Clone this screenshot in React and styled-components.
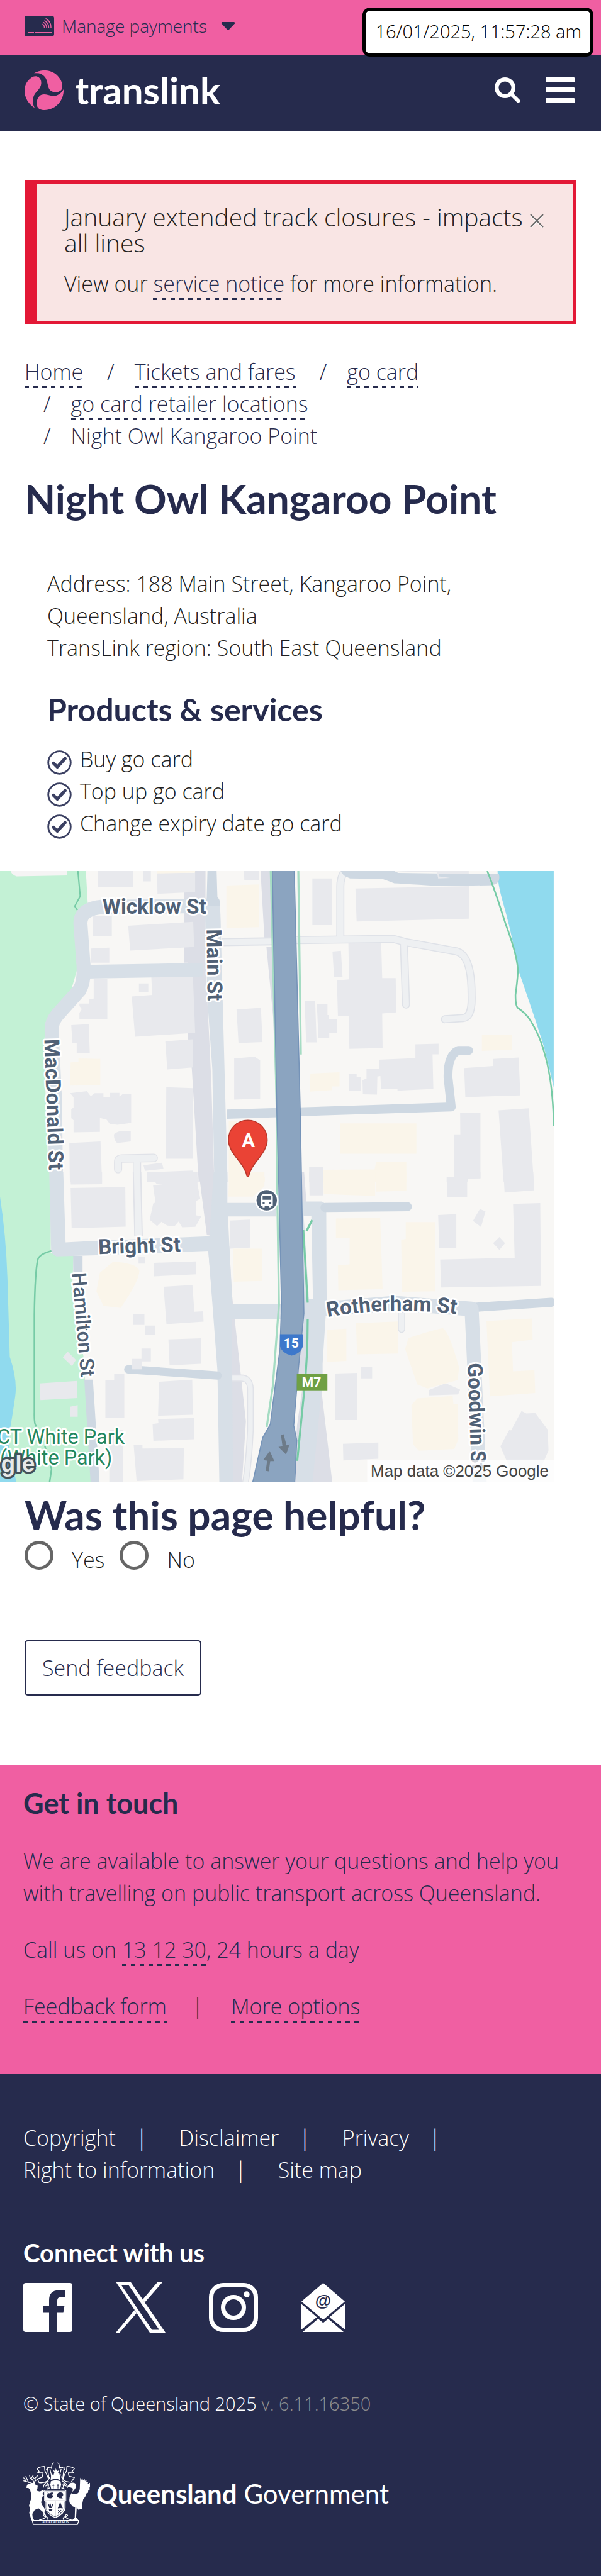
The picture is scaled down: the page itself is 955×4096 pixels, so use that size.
import React from 'react';
import styled, { createGlobalStyle, css } from 'styled-components';

const navy = '#262b4d';
const pink = '#f05fa2';
const ink = '#1f1f22';

const GlobalStyle = createGlobalStyle`
  * { box-sizing: border-box; }
  body {
    margin: 0;
    background: #fff;
    color: ${ink};
    font-family: 'Open Sans', 'Noto Sans', sans-serif;
    font-weight: 300;
    font-size: 34px;
    line-height: 51px;
  }
  h1, h2, h3, p, ul, ol { margin: 0; padding: 0; }
  ul, ol { list-style: none; }
  svg { display: block; }
`;

const Page = styled.div`
  position: relative;
`;

const TopBar = styled.div`
  display: flex;
  align-items: center;
  height: 88px;
  padding: 0 39px 5px;
  background: ${pink};
`;

const PaymentsButton = styled.button`
  display: flex;
  align-items: center;
  padding: 0;
  border: 0;
  background: none;
  color: ${navy};
  font: inherit;
  font-size: 28px;
`;

const PaymentsLabel = styled.span`
  margin: 0 22px 0 12px;
`;

const Clock = styled.time`
  position: absolute;
  top: 12px;
  right: 12px;
  padding: 2px 14px 4px 15px;
  border: 5px solid #000;
  border-radius: 12px;
  background: #fff;
  color: #000;
  font-size: 29px;
  line-height: 62px;
`;

const Header = styled.header`
  display: flex;
  align-items: center;
  height: 120px;
  padding: 0 42px 10px 39px;
  background: ${navy};
`;

const BrandLink = styled.a`
  display: flex;
  align-items: center;
  gap: 18px;
  margin-right: auto;
  color: #fff;
  text-decoration: none;
`;

const BrandName = styled.span`
  font: 700 60px/60px Lato, 'Open Sans', sans-serif;
`;

const IconButton = styled.button`
  padding: 0;
  margin-left: ${(p) => p.$gap || 0}px;
  border: 0;
  background: none;
`;

const Main = styled.main`
  padding: 79px 39px 111px;
`;

const Alert = styled.section`
  display: flex;
  align-items: flex-start;
  padding: 32px 47px 33px 43px;
  border: 5px solid #e31836;
  border-left-width: 20px;
  background: #f9e5e4;
`;

const AlertBody = styled.div`
  flex: 1;
`;

const AlertTitle = styled.h2`
  margin-bottom: 20px;
  font-size: 39px;
  font-weight: 300;
  line-height: 41px;
`;

const CloseButton = styled(IconButton)`
  margin: 16px 0 0;
`;

const Link = styled.a`
  padding-bottom: 3px;
  color: ${navy};
  text-decoration: none;
  background: linear-gradient(90deg, ${navy} 50%, transparent 0) left bottom / 14px 3px repeat-x;
`;

const Breadcrumbs = styled.ol`
  display: flex;
  flex-wrap: wrap;
  column-gap: 8px;
  margin-top: 51px;
  color: ${navy};
`;

const Crumb = styled.li`
  & + &::before {
    content: '/';
    padding: 0 32px 0 30px;
  }
`;

const heading = css`
  color: ${navy};
  font-family: Lato, 'Open Sans', sans-serif;
  font-weight: 700;
`;

const PageTitle = styled.h1`
  ${heading}
  margin-top: 38px;
  font-size: 64px;
  line-height: 72px;
`;

const SectionTitle = styled.h2`
  ${heading}
  font-size: 45px;
  line-height: 56px;
`;

const Details = styled.div`
  margin: 74px 36px 50px;
`;

const ServicesTitle = styled(SectionTitle)`
  margin: 44px 0 26px;
  font-size: 50px;
`;

const Service = styled.li`
  display: flex;
  gap: 13px;

  svg { margin-top: 11px; }
`;

const MapFrame = styled.figure`
  margin: 0 36px 16px -39px;

  svg { width: 100%; height: auto; }
`;

const FeedbackTitle = styled.h2`
  ${heading}
  font-size: 64px;
  line-height: 72px;
`;

const RadioRow = styled.fieldset`
  display: flex;
  gap: 24px;
  margin: 5px 0 102px;
  padding: 0;
  border: 0;
`;

const RadioLabel = styled.label`
  display: flex;
  align-items: flex-start;
  gap: 29px;

  span { margin-top: 5px; }
`;

const Radio = styled.input`
  appearance: none;
  width: 46px;
  height: 46px;
  margin: 0;
  border: 5px solid #666;
  border-radius: 50%;

  &:checked { background: radial-gradient(#666 45%, transparent 50%); }
`;

const SendButton = styled.button`
  height: 88px;
  padding: 0 26px;
  border: 2px solid ${navy};
  border-radius: 5px;
  background: #fff;
  color: ${navy};
  font: inherit;
`;

const Contact = styled.section`
  display: flex;
  flex-direction: column;
  gap: 39px;
  padding: 32px 37px 81px;
  background: ${pink};
  color: ${navy};
`;

const ContactLinks = styled.div`
  display: flex;
`;

const Divider = styled.span`
  margin: 0 44px 0 40px;
`;

const Footer = styled.footer`
  padding: 77px 37px 82px;
  background: ${navy};
  color: #fff;
`;

const FooterLinks = styled.ul`
  display: flex;
  flex-wrap: wrap;
  column-gap: 50px;
`;

const FooterItem = styled.li`
  &:not(:last-child)::after {
    content: '|';
    margin-left: 32px;
  }
`;

const FooterLink = styled.a`
  color: inherit;
  text-decoration: none;
`;

const ConnectTitle = styled.h2`
  ${heading}
  margin: 83px 0 24px;
  color: #fff;
  font-size: 40px;
  line-height: 46px;
`;

const Socials = styled.ul`
  display: flex;
  gap: 69px;
  height: 80px;
`;

const Copyright = styled.p`
  margin: 87px 0 68px;
  font-size: 29px;
`;

const Version = styled.span`
  color: #8d8d8d;
`;

const GovLink = styled.a`
  display: inline-flex;
  align-items: center;
  gap: 10px;
  color: #fff;
  font: 400 42px/52px Lato, 'Open Sans', sans-serif;
  text-decoration: none;

  strong { font-weight: 700; }
`;

function CardIcon() {
  return (
    <svg width="47" height="33" viewBox="0 0 47 33" fill="none" stroke={pink} aria-hidden="true">
      <rect width="47" height="33" rx="4" fill={navy} stroke="none" />
      <path d="M5 27h10M16.500 27H43" strokeWidth="2" />
      <path d="M28.500 13q3 2 3 6M30 10.500q5 3 5 8.500M31.500 7.500q7 4 7 11.500M33.500 4.500q9 5 8.500 14.500" strokeWidth="1.500" />
    </svg>
  );
}

function CaretIcon() {
  return (
    <svg width="23" height="13" viewBox="0 0 23 13" aria-hidden="true">
      <path d="M2 0h19q2 1 1 2.500L12.500 12.500q-1 1-2 0L1 2.500Q0 1 2 0z" fill={navy} />
    </svg>
  );
}

function SwirlLogo() {
  return (
    <svg width="62" height="63" viewBox="0 0 62 63" fill={pink} aria-hidden="true">
      <path d="M15 4.600C27-3 43-1 52 8c9 9 9 18 6.500 23-5 5-15 5-19-1C36 24 37 16 32 10 28 5 22 3.500 15 4.600z" />
      <path d="M13 10C5 15 0 22 0 32c0 12 7 22 16 27.500C11 50 13 40 19 34c5-5 9-11 7-18-2-6-7-8-13-6z" />
      <path d="M62 30c1 18-13 33-30 33-6 0-10-1.500-12-6-2-6 0-13 4-16.500 6-5 13-1 20 0 8 1 14-4 18-10.500z" />
    </svg>
  );
}

function SearchIcon() {
  return (
    <svg width="41" height="41" viewBox="0 0 41 41" fill="none" stroke="#fff" aria-hidden="true">
      <circle cx="16.500" cy="16.500" r="13.300" strokeWidth="6.400" />
      <path d="M26.500 26.500l11 11" strokeWidth="6" strokeLinecap="round" />
    </svg>
  );
}

function BurgerIcon() {
  return (
    <svg width="46" height="41" viewBox="0 0 46 41" fill="#fff" aria-hidden="true">
      <rect width="46" height="8" rx="1" />
      <rect y="16" width="46" height="8" rx="1" />
      <rect y="33" width="46" height="8" rx="1" />
    </svg>
  );
}

function CloseIcon() {
  return (
    <svg width="22" height="23" viewBox="0 0 22 23" fill="none" aria-hidden="true">
      <path d="M1 3l20 20M21 3L1 23" stroke="#fff" strokeWidth="1.500" />
      <path d="M1 1l20 20M21 1L1 21" stroke="#666" strokeWidth="2" />
    </svg>
  );
}

function TickIcon() {
  return (
    <svg width="39" height="39" viewBox="0 0 39 39" fill="none" stroke="#3b4062" aria-hidden="true">
      <circle cx="19.500" cy="19.500" r="17.800" strokeWidth="2.800" />
      <path d="M10 20.500l6 6L28.500 13" strokeWidth="5" strokeLinecap="round" strokeLinejoin="round" />
    </svg>
  );
}

function FacebookIcon() {
  return (
    <svg width="78" height="80" viewBox="0 -1 78 80" fill="#fff" aria-hidden="true">
      <path d="M4 0h70q4 0 4 4v70q0 4-4 4H54V47.500h9.500L65.500 36H54v-8q0-5.500 5.500-5.500H66v-11h-9q-16 0-16 16V36H31v11.500h10V78H4q-4 0-4-4V4q0-4 4-4z" />
    </svg>
  );
}

function XIcon() {
  return (
    <svg width="79" height="80" viewBox="0 0 79 80" fill="#fff" aria-hidden="true">
      <path fillRule="evenodd" d="M.5 0H24l55 80H54zM8.500 4l49 71.500H69L20 4z" />
      <path d="M66 0h8L46 32l-3-5zM0 80h6l27-31-3-5z" />
    </svg>
  );
}

function InstagramIcon() {
  return (
    <svg width="78" height="80" viewBox="0 -1 78 80" fill="none" stroke="#fff" strokeWidth="7" aria-hidden="true">
      <rect x="3.500" y="3.500" width="71" height="71" rx="19" />
      <circle cx="39" cy="39" r="16.500" />
      <circle cx="60" cy="18" r="4.700" fill="#fff" stroke="none" />
    </svg>
  );
}

function MailIcon() {
  return (
    <svg width="69" height="80" viewBox="0 -1 69 80" fill="#fff" aria-hidden="true">
      <path d="M34.500 0L69 29.500 34.500 58.500 0 29.500zM0 33.500l24.500 21L0 74zM69 33.500l-24.500 21L69 74zM2 78l24.500-21 8 6.500 8-6.500L67 78z" />
      <text x="34.500" y="37" textAnchor="middle" fontFamily="Liberation Sans, sans-serif" fontWeight="700" fontSize="26" fill={navy}>@</text>
    </svg>
  );
}

function Crest() {
  return (
    <svg width="106" height="100" viewBox="25 20 393 370" fill="#fff" aria-hidden="true">
      {/* deer */}
      <path d="M48 152l28-9 14-2 6 10 14 8-2 16-6 8 6 6 14 4 22-10 4 12-12 12 14 10-12 6-8 34 6 14 16 26-2 22 8 8-8 6-12-22-24-20-22 10-14 24 2 18 8 18-14 2-6-18-8-26 6-30-8-12 12-40 2-26-8-32-8-6-14-2z" />
      <path fill="none" stroke="#fff" strokeWidth="5" strokeLinecap="round" d="M82 146Q62 140 44 134L28 112M44 134l-16-4M56 139L40 104M88 144q-2-20-22-30l-4-16M70 118l14-22M90 142q8-14 4-28l14-14M94 120l-10-10M92 132l18-12" />
      {/* crane */}
      <path d="M286 164q8-24 28-24 22 0 22 20-2 16-14 26-12 10-8 22l30-4q12-8 14-30l2-64 6 14 8-10 2 14 10-12 2 14 10-6-2 14 12-4-4 14 20-10-8 18 8 4-10 12 6 6-12 8-2 14-10 4-6 20-12 14-6 30-2 28-22 4-8-18-4 64 12 10-2 6-36 2 18-18 2-60-14-6-18-22q-6-30 8-50 14-16 10-34-8-6-32-8z" />
      {/* mantling */}
      <g fill="none" stroke="#fff" strokeWidth="5" strokeLinejoin="round">
        <path d="M150 44q-34 2-44 14l12 16-8 6q16 4 32 2l-6 26-28 10 10 22q30 4 50-10l14-22M150 44l2 26q16 30 22 50M166 50l10 62M282 44q34 2 44 14l-14 16 10 6q-16 4-32 2l4 20 32 8-18 26q-26 4-46-10l-14-22M282 44l-2 26q-16 30-22 50M266 50l-8 62" />
        <path d="M160 66q14-26 30-10l6-28 10-4M270 66q-14-26-30-10l-6-28-8-4M182 60q10 34 12 64M248 60q-10 34-12 64M142 170q4-28 32-40M286 170q-4-28-32-40" />
      </g>
      <path d="M192 92l12 2 4-14-8-14 14 6 2-16 8 16 14-6-8 14 6 14 12-2-8 18 2 14q-28-12-56 0l2-14z" />
      <path d="M188 132q28-12 56 0l4 20-6 26h-52l-6-26z" />
      <path d="M202 148v26M229 148v26M196 157h12M223 157h12" stroke={navy} strokeWidth="4" />
      <path d="M172 140l-12 18 14-4-4 22 14-6M262 140l12 18-14-4 4 22-14-6" fill="none" stroke="#fff" strokeWidth="6" />
      {/* shield */}
      <path d="M148 184h130v62h-4v44q-4 34-60 60-56-26-60-60v-44h-6z" />
      <path fill="none" stroke={navy} strokeWidth="2.500" d="M153 189h120v58H153zM213 250v96M158 252v38q4 28 54 52 50-24 54-52v-38" />
      <path fill={navy} d="M168 198q8 10 18 2 14-6 16 4l-6 6 4 12q-4 14-22 10-14 0-14-14 0-8 6-10zM224 222q-4-20 16-24 18-2 20 12 0 14-12 14l10 10-22-2zM172 270l6-4 4 18 4-22 4 22 6-18 4 4-6 20h-16zM174 294h24l-4 12h-16zM228 292l14-38 16 38q-14-4-30 0z" />
      <path stroke={navy} strokeWidth="4" d="M230 302l16 18M248 302l-18 18" />
      {/* scroll */}
      <path fill="none" stroke="#fff" strokeWidth="5" d="M78 363h274l-8 24H84zM118 361q38-8 40-24-6-14-14-4 4 8 14 8 16 4 10 18M312 361q-38-8-40-24 6-14 14-4-4 8-14 8-16 4-10 18" />
      <text x="215" y="381" textAnchor="middle" fontFamily="Liberation Sans, sans-serif" fontWeight="700" fontSize="17">AUDAX AT FIDELIS</text>
    </svg>
  );
}

const building = '#e8e9ed';
const cream = '#faf5ea';
const road = '#d7dfe7';
const lane = '#ced8e2';
const kerb = '#dcdee6';
const park = '#c3f1d5';
const track = '#76cba6';

const MapLabel = styled.text`
  font-family: Roboto, sans-serif;
  font-size: ${(p) => p.$size || 41}px;
  font-weight: ${(p) => p.$weight || 700};
  fill: ${(p) => p.$fill || '#506176'};
  stroke: #fff;
  stroke-width: 7px;
  stroke-linejoin: round;
  paint-order: stroke;
`;

const MapSign = styled.text`
  font-family: Roboto, sans-serif;
  font-size: ${(p) => p.$size}px;
  font-weight: 700;
  text-anchor: middle;
  fill: #fff;
`;

function StreetMap() {
  return (
    <svg viewBox="0 0 1086 1200" role="img" aria-label="Map of Night Owl Kangaroo Point">
      <defs>
        <path id="rotherham" d="M642 875Q720 862 790 863T900 870" />
      </defs>
      <rect width="1086" height="1200" fill="#f8f7f5" />

      {/* north west */}
      <g transform="translate(0 -10) scale(.3827 .3954)">
        <path fill={park} d="M0 25h440l10 170-70 80 15 240-30 100-130 160-10 120 25 690H0z" />
        <path fill="#f5f4f4" d="M55 25h290v22l-260 5q-25-8-30-27z" />
        <path fill="none" stroke={track} strokeWidth="7" d="M399 25l12 125-28 50 14 20" />
        <path fill={kerb} d="M998 25h55v450l30 600 15 493h-80l-35-560-20-160V480h-20V130h55z" />
        <g fill={building}>
          <path d="M500 25h183v78H500zM733 25h40v52h-40zM805 35h195v95l-193 8zM477 250h96v100h-96zM657 297l333-20 5 125-328 18zM465 410l95-5v75h-95zM480 560h70v200H407v-30l12-20-12-15v-12h50v-20l23-5zM712 583h48v42h-48zM775 545l213-10 12 293-308 20-17-200 105-8zM365 790l90-5 5 145h-67v-50h-22zM847 870l140-10v140l-130 10zM360 1128l85-10 20 25 20-15h45v18h32v-20h50v18l20-14h40v145l-70 10-40-5-15-20-35-10v70l-135 2v-60l-12-10v-45l12-8v-50zM585 1330q20-20 85-15v52l-70 8q-20-20-15-45zM852 1098l135 5v350H850zM355 1375l160-8 8 201H358zM735 1485l95-12 8 30-95 10zM752 1520l235-8 40 56H752zM1250 25h77v45l-75 2zM1212 712l125-8 8 170-123 5zM1200 955l105-8 28 18v190l-133 5z" />
        </g>
        <g fill={cream}>
          <path d="M1160 97l168-5v212l-168 4zM362 975l40-2v-18l112 3v130l-154 2zM1172 1265h45l-10 140 60 140h90v23h-185zM805 25h195v8l-195 4z" />
        </g>
        <path fill={kerb} d="M1335 25h50l30 1180-15-450-35-355h30l-2-40h-38z" />
        <path fill="none" stroke="#e0e2e8" strokeWidth="42" strokeLinecap="round" d="M605 1505v-35q0-18 20-18l163-3M702 1460v108" />
        <path fill="none" stroke="#eef0f2" strokeWidth="34" strokeLinecap="round" d="M605 1505v-35q0-18 20-18l163-3M702 1460v108" />
        <path fill="none" stroke={road} strokeWidth="72" d="M525 203Q412 212 412 285l16 210q4 80-20 120l-115 125q-32 38-28 80l16 330 6 420" />
        <path fill="none" stroke={road} strokeWidth="68" d="M440 525l600-10" />
        <path fill="none" stroke={road} strokeWidth="72" d="M510 205l580-8" />
        <path fill={lane} d="M1063 25h47l4 130q12 10 14 30l2 120h-75z" />
        <path fill={road} d="M1050 200h78l38 1368h-68l-10-560-25-340z" />
        <path fill="none" stroke={lane} strokeWidth="46" d="M1163 1232l260-8" />
        <path fill="none" stroke="#dfe2e8" strokeWidth="40" d="M1135 378l260-4" />
        <path fill="none" stroke="#eef0f2" strokeWidth="28" d="M1135 378l260-4" />
      </g>

      {/* north east */}
      <g transform="translate(560 -10) scale(.3948 .3954)">
        <path fill="#90daee" d="M1053 25h279v1075q-20-90-48-200-30-100-130-390-30-180-80-350-20-70-21-135z" />
        <g fill={building}>
          <path d="M133 62h97v232h-97zM347 112l565-12-2 162-557 14zM233 425l42-4 8 132h-42zM312 382h163l5 175h67l3 170-70 5 2 172-165 4-3-162-54-3-5-175 60-5zM95 670l52-2 7 208h-52zM155 685h53v55h6v22h43v68h-40v22h-54l-5-112zM645 885l115-3v53h-30l4 172-178 8v-10h-82l-3-62-15 2-2 90-70-2-2-70 20-8v-48l64-2-3-43 182-8zM313 1032h40v15h22v70h-60zM887 1003l145-10v-35l126-7 8 188-273 8zM867 1225l101 2v322l-62 4-3 15H800v-26h38v-210h30zM1058 1213l150-10 25 365H1083zM117 1495h68v73h-68z" />
        </g>
        <g fill={cream}>
          <path d="M975 840h150v72l-150 6zM123 1030l145-6v70h-36v18l-110 8zM270 1278h380v150H270zM450 1468h150v100H187v-60l255-2z" />
        </g>
        <path fill="none" stroke="#dfe2e8" strokeWidth="40" strokeLinecap="round" d="M50 368l485-6 60 16 255 46q75 20 74 220 4 108-43 111l-90 6M272 360V100q0-45 25-80M588 390l10 298" />
        <path fill="none" stroke="#eef0f2" strokeWidth="30" strokeLinecap="round" d="M50 368l485-6 60 16 255 46q75 20 74 220 4 108-43 111l-90 6M272 360V100q0-45 25-80M588 390l10 298" />
        <path fill={lane} d="M275 25h265l20 10 500 6q12 55-50 55l-240 4q-160-10-230-14-30-12-60-22l-160-2q-40-14-45-37z" />
        <path fill={building} d="M540 25h370v15l-150-2v14l58 8-60 2-6-30-170-4z" />
        <path fill="none" stroke={lane} strokeWidth="44" strokeLinecap="round" strokeLinejoin="round" d="M70 1220l753-24-16-146q-2-110 50-134h52" />
        <path fill="none" stroke={track} strokeWidth="8" d="M1002 25q40 100 90 260 60 160 62 235-2 50-12 120 0 60 14 66 40 28 60 60 50 80 75 180 38 140 41 344" />
      </g>

      {/* south west */}
      <g transform="translate(0 590) scale(.3827 .4082)">
        <path fill={park} d="M0 0h260v390h118l-10 200 60 300 40 603H0z" />
        <path fill="#90daee" d="M0 120q30 180 38 390l12 380q40 110 28 190-20 130-28 160-20 60 35 253H0z" />
        <path fill="none" stroke={track} strokeWidth="8" d="M268 380q-70 16-75 45-14 60-17 260v470q-2 60 10 70M230 1320l34 110-10 63" />
        <path fill={kerb} d="M1018 0h82l10 310-50-5zM1065 360h110l15 240 70 600-20 293h-100l-20-540z" />
        <g fill={building}>
          <path d="M358 0h165v60l-160 2zM362 78l280-4 2 190-277 8zM752 0h260v60l14 70-20 10v70l25 5-30 50-68 2-18-28-20 22-38-2-30-18-22 20-38-30 18-78 12-5-8-50-5-35h50l-30-3zM790 438l215-7v62l-215 10zM838 553l148-8 10 128 45-2 2 50-190 12zM683 685h57v52h-57zM742 740h52v46h-52zM863 806l166-5v122l-160 8zM725 850h48v62h-48zM540 1003h45v-30h52v210h-97zM815 1010l170-10 3 168-178 5zM782 1213l30-4-2-20 184-5v102l-208 8zM685 1315h45v16l212-2-2 150-240 8zM322 892l25-27 42 40-20 30zM203 1018l192-12 2 82-190 10zM360 1130l38-8v56h-38zM1178 235l105-5v135l-105 5zM710 410h35v32h-35zM560 1240h70v253h-70z" />
        </g>
        <g fill={cream}>
          <path d="M1175 0h180v70l-60 50h-125zM1193 370h150v155l-145 4zM580 433q120 6 134 42 0 50-96 180l-88-10-36-70 18-90z" />
        </g>
        <path fill="none" stroke="#e0e2e8" strokeWidth="44" d="M702 0l8 310" />
        <path fill="none" stroke="#eef0f2" strokeWidth="32" d="M702 0l8 310" />
        <path fill="none" stroke="#e0e2e8" strokeWidth="34" d="M1185 992h50q45 0 48 50v200q-8 160-25 251" />
        <path fill="none" stroke="#eef0f2" strokeWidth="24" d="M1185 992h50q45 0 48 50v200q-8 160-25 251" />
        <path fill={road} d="M252 0h72l12 340 154-8 600-22v70l-600 22-200 5q-24-6-28-30z" />
        <path fill={lane} d="M375 405h48v85l-48-10zM432 1000h44l34 493h-46z" />
        <path fill={road} d="M1095 0h70v150h250v65h-247l22 420h250v72h-252l6 786h-70l-10-540-46-570z" />
        <path fill="none" stroke={lane} strokeWidth="40" strokeLinecap="round" d="M656 950l460 30" />
        <path fill={building} d="M676 900h52v50h-52z" />
      </g>

      {/* south east */}
      <g transform="translate(560 590) scale(.3948 .4082)">
        <path fill={kerb} d="M80 0h12l80 1000 60 493H50z" />
        <g fill={building}>
          <path d="M117 0h68v114h-66zM838 0h130v32h-66v90H802V25h36zM1082 0h148l4 90-146 10zM1130 155l135-4 4 398-497 8-4-135 370-8zM758 208l90-4v164h-85zM965 180l28 10-22 76-40-30zM1062 314l28 30-28 32-31-32zM245 970l110-3v227H245zM374 938h56v56h-56zM285 1308l176-6v78l-174 8zM710 1050l85-33 72 30-10 24-144 4zM1172 1150l24 12 44-2 62 80 4 100-40 90h-150l-49-110 45-80 8 4z" />
        </g>
        <g fill={cream}>
          <path d="M187 0h258v116l-125-4-130-5zM450 0h150v92l-150 4zM250 225l220-3 12 342-220 6-2-120 58-4V318h-68zM597 242h147v333l-165 2-5-250 23-4zM205 760l97-5v155l-95 4zM350 728l207-8 3 154-205 4zM610 800q90-30 170-48 30 10 82 190l-8 60-150 40-50-20-60-170zM655 1090l175-12 4 40h20l4 170-20 45-175 8-30-30-8-190zM998 718l227-12 2 102-103 12 6 140 106-6 4 110-225 16z" />
        </g>
        <path fill={road} d="M80 143h100q22 8 22 40l2 440-20 300v80l-50 490H55l40-560z" />
        <path fill="#f8f7f5" d="M90 212h38l8 400h-20zM40 1220l24-230 18 60-34 230z" />
        <path fill="none" stroke={lane} strokeWidth="44" strokeLinecap="round" d="M195 172l410-4M940 652l380-24" />
        <path fill="none" stroke={road} strokeWidth="70" strokeLinejoin="round" d="M190 660l350-28 384 28 40 833" />
        <path fill="#eef0f2" stroke="#dfe2e8" strokeWidth="5" d="M560 675h32v85q-16 26-32 0z" />
        <path fill="none" stroke={track} strokeWidth="10" d="M88 280l22 350M110 710q0 180-18 350l-34 330M104 285l28-52" />
      </g>

      {/* Pacific Motorway */}
      <path fill="none" stroke="#a5dcc3" strokeWidth="4" d="M531 0l12 480 0 110 4 261-12 160-12 80M585 0l5 360" />
      <path fill="#8ba4c0" stroke="#7593b8" strokeWidth="2" d="M534 -2l9 482 3 110 6 261-3 86-19 149-15 26-20 90h83l4-85-6-29 9-110 11-110-5-278-2-110-12-482z" />
      <path fill="#6d7b89" d="M521 1177l3-20-8-1 13-18 9 20-8 0-3 20zM551 1107l5-2 6 22 6-2-7 20-15-15 8-1z" />
      <path fill="#3d78cb" d="M549 909h45v24q-4 14-22 18-18-4-23-18z" />
      <MapSign x="571" y="936" $size={26}>15</MapSign>
      <rect x="582" y="987" width="60" height="32" fill="#6fa044" />
      <MapSign x="611" y="1012" $size={26}>M7</MapSign>

      {/* bus stop */}
      <circle cx="523" cy="646" r="23" fill="#fff" />
      <circle cx="523" cy="646" r="20" fill="#506176" />
      <path fill="#fff" d="M516 634h15q4 1 4 5v18h-3v3h-4v-3h-9v3h-4v-3h-3v-18q0-4 4-5z" />
      <path fill="#506176" d="M515 638h17v7h-17zM515 649h4v4h-4zM528 649h4v4h-4z" />

      {/* place marker */}
      <path fill="#ea4335" stroke="#b8372b" strokeWidth="2" d="M486 489a38 38 0 0 1 38 39c0 26-32 46-36 70q-2 4-4 0c-4-24-36-44-36-70a38 38 0 0 1 38-39z" />
      <MapSign x="487" y="542" $size={38}>A</MapSign>

      <MapLabel x="201" y="84">Wicklow St</MapLabel>
      <MapLabel transform="translate(405 114) rotate(89)">Main St</MapLabel>
      <MapLabel transform="translate(87 330) rotate(88)">MacDonald St</MapLabel>
      <MapLabel transform="translate(193 752) rotate(-2)">Bright St</MapLabel>
      <MapLabel $size={39} $weight={500} transform="translate(141 789) rotate(85)">Hamilton St</MapLabel>
      <MapLabel><textPath href="#rotherham">Rotherham St</textPath></MapLabel>
      <MapLabel transform="translate(917 966) rotate(88)">Goodwin St</MapLabel>
      <MapLabel $size={40} $weight={400} $fill="#23875f" x="-6" y="1124">CT White Park</MapLabel>
      <MapLabel $size={40} $weight={400} $fill="#23875f" x="0" y="1165">(White Park)</MapLabel>
      <text x="2" y="1178" fontFamily="Liberation Sans, sans-serif" fontWeight="700" fontSize="46" fill="#e6e8e8" stroke="#43525a" strokeWidth="8" paintOrder="stroke" strokeLinejoin="round">gle</text>

      <rect x="720" y="1155" width="366" height="45" fill="#fff" opacity=".75" />
      <text x="1076" y="1188" textAnchor="end" fontFamily="Liberation Sans, sans-serif" fontSize="32" fill="#444">Map data ©2025 Google</text>
    </svg>
  );
}

const crumbs = ['Home', 'Tickets and fares', 'go card', 'go card retailer locations'];
const services = ['Buy go card', 'Top up go card', 'Change expiry date go card'];
const footerLinks = ['Copyright', 'Disclaimer', 'Privacy', 'Right to information', 'Site map'];
const socials = [
  ['Facebook', FacebookIcon],
  ['X', XIcon],
  ['Instagram', InstagramIcon],
  ['Email', MailIcon],
];

export default function App() {
  return (
    <Page>
      <GlobalStyle />
      <TopBar>
        <PaymentsButton type="button">
          <CardIcon />
          <PaymentsLabel>Manage payments</PaymentsLabel>
          <CaretIcon />
        </PaymentsButton>
      </TopBar>
      <Header>
        <BrandLink href="#home">
          <SwirlLogo />
          <BrandName>translink</BrandName>
        </BrandLink>
        <IconButton type="button" aria-label="Search"><SearchIcon /></IconButton>
        <IconButton type="button" aria-label="Menu" $gap={40}><BurgerIcon /></IconButton>
      </Header>
      <Clock>16/01/2025, 11:57:28 am</Clock>

      <Main>
        <Alert>
          <AlertBody>
            <AlertTitle>January extended track closures - impacts all lines</AlertTitle>
            <p>View our <Link href="#notice">service notice</Link> for more information.</p>
          </AlertBody>
          <CloseButton type="button" aria-label="Close"><CloseIcon /></CloseButton>
        </Alert>

        <nav aria-label="Breadcrumb">
          <Breadcrumbs>
            {crumbs.map((name) => (
              <Crumb key={name}><Link href="#crumb">{name}</Link></Crumb>
            ))}
            <Crumb>Night Owl Kangaroo Point</Crumb>
          </Breadcrumbs>
        </nav>

        <PageTitle>Night Owl Kangaroo Point</PageTitle>

        <Details>
          <p>Address: 188 Main Street, Kangaroo Point, Queensland, Australia</p>
          <p>TransLink region: South East Queensland</p>
          <ServicesTitle>Products &amp; services</ServicesTitle>
          <ul>
            {services.map((name) => (
              <Service key={name}><TickIcon />{name}</Service>
            ))}
          </ul>
        </Details>

        <MapFrame><StreetMap /></MapFrame>

        <form>
          <FeedbackTitle id="helpful">Was this page helpful?</FeedbackTitle>
          <RadioRow aria-labelledby="helpful">
            <RadioLabel><Radio type="radio" name="helpful" /><span>Yes</span></RadioLabel>
            <RadioLabel><Radio type="radio" name="helpful" /><span>No</span></RadioLabel>
          </RadioRow>
          <SendButton type="button">Send feedback</SendButton>
        </form>
      </Main>

      <Contact>
        <SectionTitle>Get in touch</SectionTitle>
        <p>We are available to answer your questions and help you with travelling on public transport across Queensland.</p>
        <p>Call us on <Link href="tel:131230">13 12 30</Link>, 24 hours a day</p>
        <ContactLinks>
          <span><Link href="#feedback">Feedback form</Link></span>
          <Divider>|</Divider>
          <span><Link href="#options">More options</Link></span>
        </ContactLinks>
      </Contact>

      <Footer>
        <FooterLinks>
          {footerLinks.map((name) => (
            <FooterItem key={name}><FooterLink href="#footer">{name}</FooterLink></FooterItem>
          ))}
        </FooterLinks>
        <ConnectTitle>Connect with us</ConnectTitle>
        <Socials>
          {socials.map(([name, Icon]) => (
            <li key={name}><FooterLink href="#social" aria-label={name}><Icon /></FooterLink></li>
          ))}
        </Socials>
        <Copyright>© State of Queensland 2025 <Version>v. 6.11.16350</Version></Copyright>
        <GovLink href="#qld"><Crest /><span><strong>Queensland</strong> Government</span></GovLink>
      </Footer>
    </Page>
  );
}
